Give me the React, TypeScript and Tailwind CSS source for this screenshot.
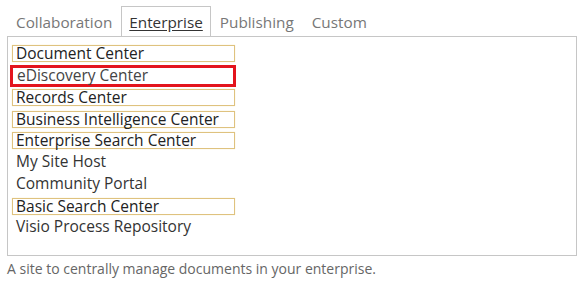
import React from "react";

const tabs = ["Collaboration", "Enterprise", "Publishing", "Custom"];

const items: { name: string; mark?: "yellow" | "red" }[] = [
  { name: "Document Center", mark: "yellow" },
  { name: "eDiscovery Center", mark: "red" },
  { name: "Records Center", mark: "yellow" },
  { name: "Business Intelligence Center", mark: "yellow" },
  { name: "Enterprise Search Center", mark: "yellow" },
  { name: "My Site Host" },
  { name: "Community Portal" },
  { name: "Basic Search Center", mark: "yellow" },
  { name: "Visio Process Repository" },
];

export default function App() {
  return (
    <div
      className="w-[584px] h-[285px] bg-white pl-[7px] pt-[6px] overflow-hidden"
      style={{ fontFamily: '"Open Sans", "Noto Sans", sans-serif' }}
    >
      <div className="flex w-[570px]">
        {tabs.map((t) => {
          const sel = t === "Enterprise";
          return (
            <div
              key={t}
              className={
                sel
                  ? "relative z-10 -mb-px h-[30px] px-[7px] border border-b-0 border-[#c6c6c6] bg-white text-[#333] underline underline-offset-2 text-[15.3px] leading-[30px]"
                  : "h-[30px] px-[8px] border border-transparent text-[#777] text-[15.3px] leading-[30px]"
              }
            >
              {t}
            </div>
          );
        })}
      </div>
      <div className="w-[570px] h-[220px] border border-[#c6c6c6] pt-[6px] pl-[4px]">
        {items.map((it) => (
          <div key={it.name} className="h-[21.75px] flex items-center">
            {it.mark === "red" ? (
              <div className="-ml-[2px] w-[226px] h-[22px] border-[3px] border-[#e3141d] pl-[4px] text-[15.5px] leading-[15px] text-[#444] whitespace-nowrap">
                {it.name}
              </div>
            ) : it.mark === "yellow" ? (
              <div className="w-[223px] h-[17px] border border-[#dfc27f] pl-[3px] text-[15.5px] leading-[14px] text-[#222] shadow-[0_0_1px_#f3e3b8] whitespace-nowrap">
                {it.name}
              </div>
            ) : (
              <div className="w-[223px] h-[17px] pl-[4px] text-[15.5px] leading-[15px] text-[#333] whitespace-nowrap">
                {it.name}
              </div>
            )}
          </div>
        ))}
      </div>
      <div className="mt-[5px] text-[14px] text-[#666] leading-[16px]">
        A site to centrally manage documents in your enterprise.
      </div>
    </div>
  );
}
